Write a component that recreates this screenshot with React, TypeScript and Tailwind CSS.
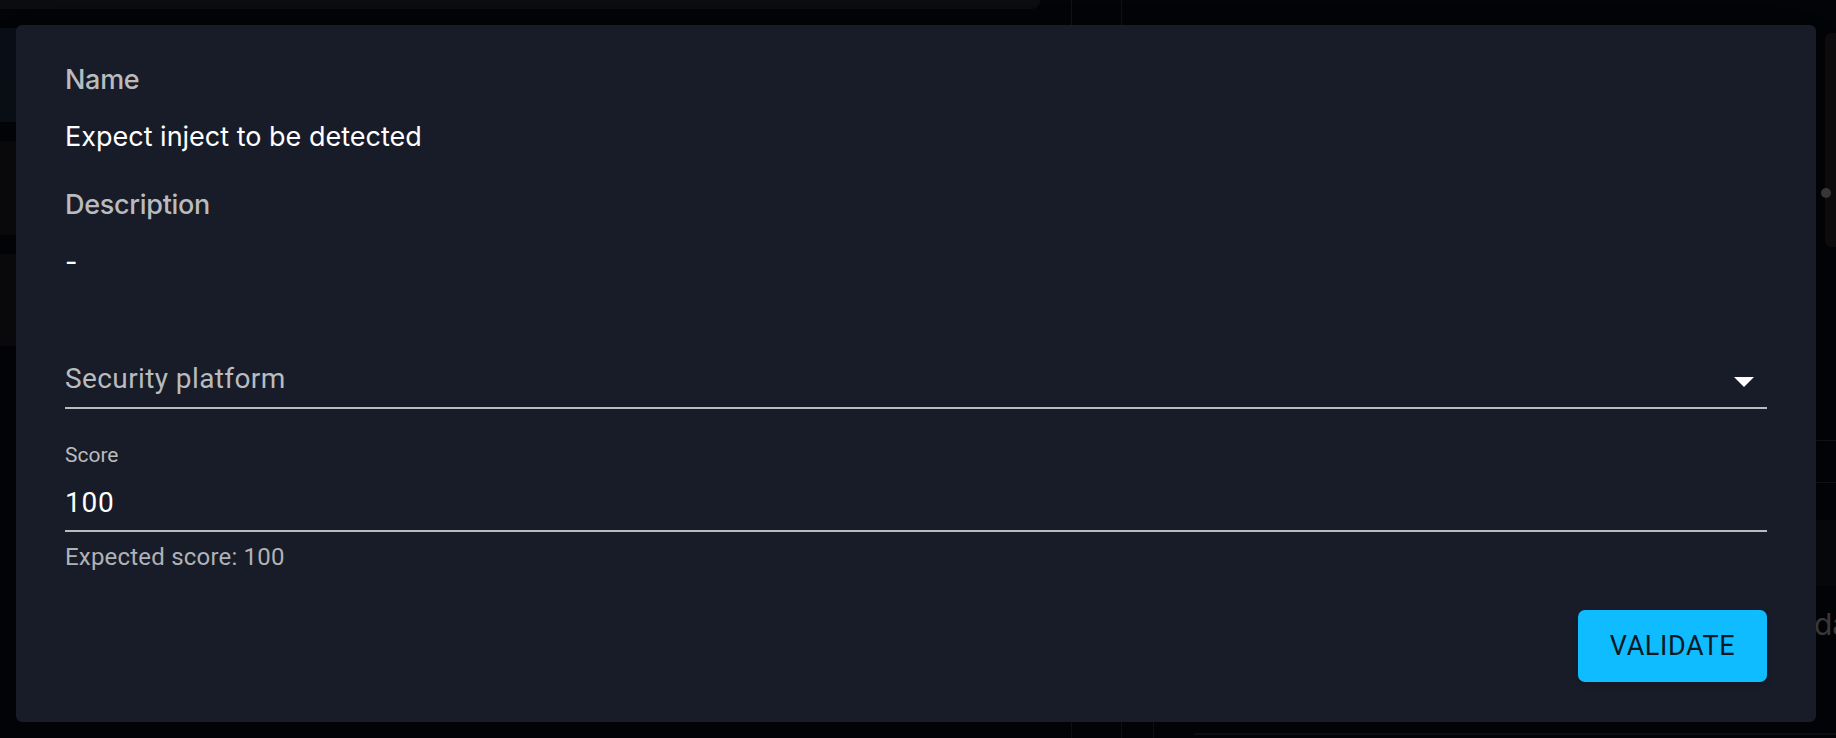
import React from "react";

const BackgroundPage = () => {
    return (
        <div className="flex h-full">
            <div className="flex w-[1071px] flex-col">
                <div className="h-[9px] w-[1040px] rounded-br-lg bg-[#0b0c10]" />
                <div className="mt-[19px] h-[94px] w-[1040px] bg-[#0a0f17]" />
                <div className="mt-[19px] h-[94px] w-[1040px] bg-[#0a0a0d]" />
                <div className="mt-[19px] h-[92px] w-[1040px] bg-[#0a0a0d]" />
            </div>
            <div className="w-px bg-[#101216]" />
            <div className="w-[49px]" />
            <div className="w-px bg-[#101216]" />
            <div className="flex min-w-0 flex-1 flex-col">
                <div className="mt-[33px] flex justify-end">
                    <div className="relative h-[214px] w-[11px] rounded-l-md bg-[#0e0c0c]">
                        <span className="absolute left-[-4px] top-[155px] h-[10px] w-[10px] rounded-full bg-[#3a3a3a]" />
                    </div>
                </div>
                <div className="mt-[193px] h-px bg-[#101216]" />
                <div className="mt-[41px] h-px bg-[#101216]" />
                <div className="mt-[37px] h-[66px] bg-[#06080b]" />
                <div className="mt-[23px] flex justify-end">
                    <span className="w-[22px] overflow-hidden whitespace-nowrap font-[family-name:Inter,sans-serif] text-[30px] leading-[30px] text-[#3c3c3c]">
                        da
                    </span>
                </div>
                <div className="mt-auto flex h-[30px]">
                    <div className="ml-[31px] w-px bg-[#101216]" />
                    <div className="ml-[40px] mt-[25px] h-[2px] flex-1 bg-[#0d0f13]" />
                </div>
            </div>
        </div>
    );
};

export default function App() {
    return (
        <div className="relative h-[738px] w-[1836px] overflow-hidden bg-[#020408]">
            <BackgroundPage />

            {/* dialog */}
            <div className="absolute inset-0 pb-[16px] pl-[16px] pr-[20px] pt-[25px]">
                <div className="flex h-full flex-col rounded-md bg-[#171c28] px-[49px] pb-[40px] pt-[39px] shadow-2xl">
                    <div className="font-[family-name:Inter,sans-serif] text-[27px] font-medium leading-[32px] tracking-[-0.3px] text-[#b9bbbf]">
                        Name
                    </div>
                    <div className="mt-[25px] font-[family-name:Inter,sans-serif] text-[27px] leading-[32px] text-white">
                        Expect inject to be detected
                    </div>
                    <div className="mt-[36px] font-[family-name:Inter,sans-serif] text-[27px] font-medium leading-[32px] tracking-[-0.3px] text-[#b9bbbf]">
                        Description
                    </div>
                    <div className="mt-[25px] font-[family-name:Inter,sans-serif] text-[27px] leading-[32px] text-white">
                        -
                    </div>

                    <div className="mt-[85px] flex justify-between border-b-2 border-[#b9bbbf] pb-[12px]">
                        <span className="font-[family-name:Roboto,sans-serif] text-[28px] leading-[32px] tracking-[0.4px] text-[#b9bbbf]">
                            Security platform
                        </span>
                        <svg className="mr-[13px] mt-[14px] h-[10px] w-[20px]" viewBox="0 0 20 10">
                            <path d="M0 0 L20 0 L10 10 Z" fill="#ffffff" />
                        </svg>
                    </div>

                    <div className="mt-[34px] font-[family-name:Roboto,sans-serif] text-[21px] leading-[24px] text-[#b9bbbf]">
                        Score
                    </div>
                    <div className="mt-[20px] border-b-2 border-[#b9bbbf] pb-[11px] font-[family-name:Roboto,sans-serif] text-[28px] leading-[32px] tracking-[0.8px] text-white">
                        100
                    </div>
                    <div className="mt-[11px] font-[family-name:Roboto,sans-serif] text-[24px] leading-[28px] tracking-[0.2px] text-[#b0b2b6]">
                        Expected score: 100
                    </div>

                    <div className="mt-auto flex justify-end">
                        <button className="h-[72px] w-[189px] rounded-[7px] bg-[#0fbcff] font-[family-name:Roboto,sans-serif] text-[27px] font-normal tracking-[0.6px] text-[#0a1922] shadow-md">
                            VALIDATE
                        </button>
                    </div>
                </div>
            </div>
        </div>
    );
}
